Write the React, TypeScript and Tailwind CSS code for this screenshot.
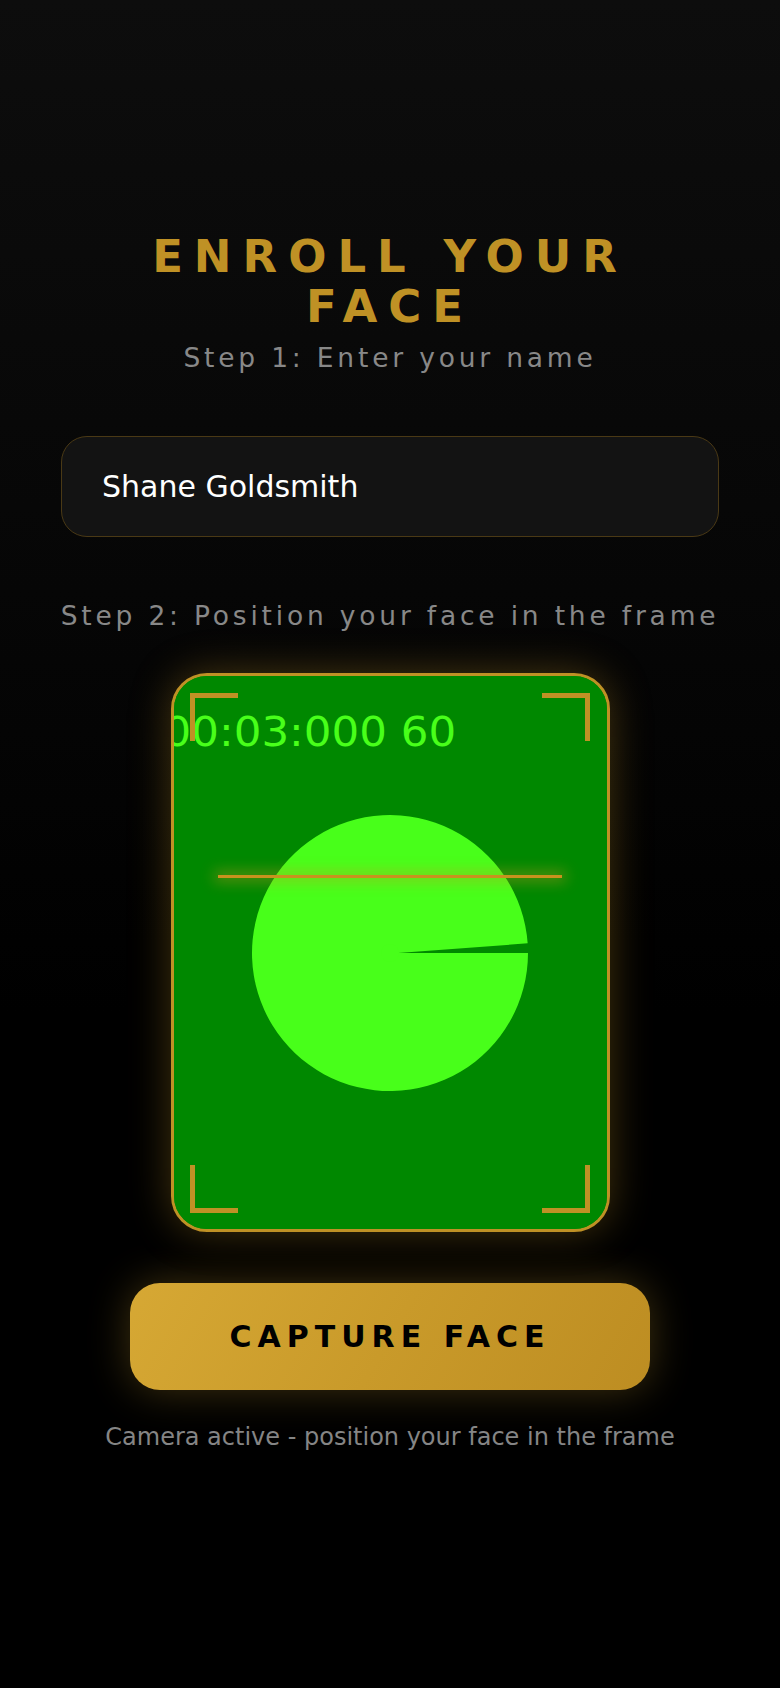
import React from "react";

export default function App() {
  return (
    <div className="min-h-screen w-full bg-[linear-gradient(180deg,#0d0d0d_0%,#060606_35%,#000000_60%,#000000_100%)] flex flex-col items-center font-['DejaVu_Sans',sans-serif]">
      <h1 className="mt-[232px] w-[600px] text-center text-[45px] leading-[1.1] font-bold tracking-[11px] text-[#bf9125]">
        ENROLL YOUR FACE
      </h1>
      <p className="mt-[11px] text-[26.5px] leading-[32px] tracking-[3.8px] text-[#888888]">
        Step 1: Enter your name
      </p>
      <input
        readOnly
        defaultValue="Shane Goldsmith"
        className="mt-[62px] w-[658px] h-[101px] rounded-[26px] border-[1.5px] border-[#4a3915] bg-[#131313] pl-[40px] text-[30px] text-white outline-none font-['DejaVu_Sans',sans-serif]"
      />
      <p className="mt-[63px] text-[26.5px] leading-[32px] tracking-[3.8px] text-[#888888]">
        Step 2: Position your face in the frame
      </p>
      <div className="mt-[41px] relative w-[439px] h-[559px] rounded-[36px] border-[3px] border-[#bf9125] bg-[#008800] overflow-hidden shadow-[0_0_40px_rgba(191,145,37,0.35)]">
        <svg
          className="absolute inset-0"
          width="433"
          height="553"
          viewBox="0 0 433 553"
        >
          <rect x="0" y="0" width="433" height="553" fill="#008800" />
          <path
            d="M224 277 L354 277 A138 138 0 1 1 353.66 267.37 Z"
            fill="#48ff1a"
          />
          <circle cx="216" cy="277" r="9" fill="#48ff1a" />
          <text
            transform="translate(-10.5 69.5) scale(1.09 1)"
            x="0"
            y="0"
            fontSize="40"
            fill="#48ff1a"
            fontFamily="DejaVu Sans, sans-serif"
          >
            00:03:000 60
          </text>
        </svg>
        <div className="absolute left-[44px] top-[199px] w-[344px] h-[3px] bg-[#c8921e] shadow-[0_0_14px_4px_rgba(200,150,30,0.45)]" />
        <div className="absolute left-[16px] top-[17px] w-12 h-12 border-t-[5px] border-l-[5px] border-[#bf9125]" />
        <div className="absolute right-[17px] top-[17px] w-12 h-12 border-t-[5px] border-r-[5px] border-[#bf9125]" />
        <div className="absolute left-[16px] bottom-[16px] w-12 h-12 border-b-[5px] border-l-[5px] border-[#bf9125]" />
        <div className="absolute right-[17px] bottom-[16px] w-12 h-12 border-b-[5px] border-r-[5px] border-[#bf9125]" />
      </div>
      <button className="mt-[51px] w-[520px] h-[107px] rounded-[30px] bg-[linear-gradient(120deg,#d6a834_0%,#c99a2a_50%,#bd8d22_100%)] shadow-[0_0_40px_rgba(212,165,50,0.3)] text-[30px] font-bold tracking-[6px] text-black font-['DejaVu_Sans',sans-serif]">
        CAPTURE FACE
      </button>
      <p className="mt-[29px] text-[24px] leading-[36px] text-[#858585]">
        Camera active - position your face in the frame
      </p>
    </div>
  );
}
